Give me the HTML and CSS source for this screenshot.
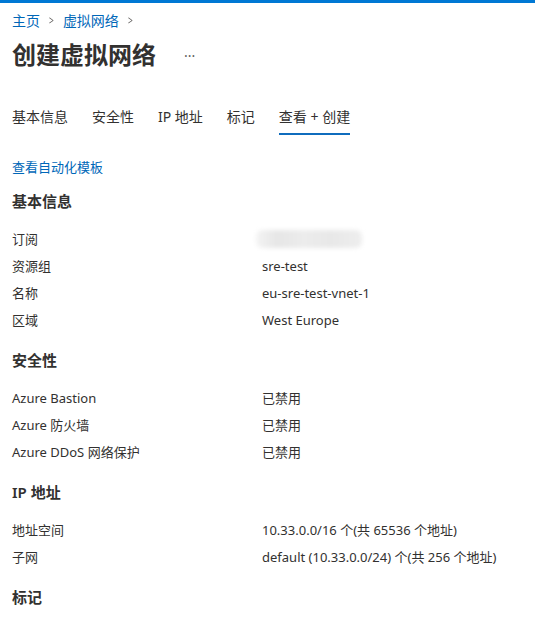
FILE: index.html
```html
<!DOCTYPE html>
<html lang="zh-CN">
<head>
    <meta charset="UTF-8">
    <meta name="viewport" content="width=device-width, initial-scale=1.0">
    <title>创建虚拟网络</title>
    <link rel="stylesheet" href="styles.css">
</head>
<body>
    <div class="top-bar"></div>

    <div class="page">
        <nav class="breadcrumb">
            <a href="#">主页</a>
            <span class="chevron">&gt;</span>
            <a href="#">虚拟网络</a>
            <span class="chevron">&gt;</span>
        </nav>

        <div class="title-row">
            <h1>创建虚拟网络</h1>
            <span class="more">···</span>
        </div>

        <div class="tabs">
            <span class="tab">基本信息</span>
            <span class="tab">安全性</span>
            <span class="tab">IP 地址</span>
            <span class="tab">标记</span>
            <span class="tab active">查看 + 创建</span>
        </div>

        <a class="template-link" href="#">查看自动化模板</a>

        <div class="section">
            <h2>基本信息</h2>
            <div class="row"><span class="label">订阅</span><span class="value"><span class="blurred"></span></span></div>
            <div class="row"><span class="label">资源组</span><span class="value">sre-test</span></div>
            <div class="row"><span class="label">名称</span><span class="value">eu-sre-test-vnet-1</span></div>
            <div class="row"><span class="label">区域</span><span class="value">West Europe</span></div>
        </div>

        <div class="section">
            <h2>安全性</h2>
            <div class="row"><span class="label">Azure Bastion</span><span class="value">已禁用</span></div>
            <div class="row"><span class="label">Azure 防火墙</span><span class="value">已禁用</span></div>
            <div class="row"><span class="label">Azure DDoS 网络保护</span><span class="value">已禁用</span></div>
        </div>

        <div class="section">
            <h2>IP 地址</h2>
            <div class="row"><span class="label">地址空间</span><span class="value">10.33.0.0/16 个(共 65536 个地址)</span></div>
            <div class="row"><span class="label">子网</span><span class="value">default (10.33.0.0/24) 个(共 256 个地址)</span></div>
        </div>

        <div class="section">
            <h2>标记</h2>
        </div>
    </div>
</body>
</html>
```

FILE: styles.css
```css
* {
    margin: 0;
    padding: 0;
    box-sizing: border-box;
}
body {
    font-family: "Segoe UI", "Noto Sans", "Noto Sans CJK SC", sans-serif;
    color: #323130;
    background: white;
    font-size: 13px;
}
.top-bar {
    height: 3px;
    background: #0078d4;
}
.page {
    padding: 0 12px;
}
.breadcrumb {
    display: flex;
    align-items: center;
    gap: 8px;
    margin-top: 7px;
    height: 20px;
    font-size: 14px;
}
.breadcrumb a {
    color: #0067b8;
    text-decoration: none;
}
.chevron {
    color: #605e5c;
    font-size: 12px;
    transform: scaleX(0.7);
}
.title-row {
    display: flex;
    align-items: center;
    margin-top: 9px;
    height: 32px;
}
.title-row h1 {
    font-size: 24px;
    font-weight: 700;
    line-height: 32px;
}
.more {
    margin-left: 28px;
    color: #605e5c;
    font-size: 14px;
}
.tabs {
    display: flex;
    gap: 24px;
    margin-top: 36px;
    font-size: 14px;
}
.tab {
    line-height: 20px;
    padding-bottom: 6px;
    border-bottom: 2px solid transparent;
}
.tab.active {
    border-bottom-color: #0f6cbd;
}
.template-link {
    display: block;
    margin-top: 22px;
    line-height: 20px;
    color: #0067b8;
    text-decoration: none;
    width: max-content;
}
.section {
    margin-top: 13px;
    margin-bottom: 1px;
}
.section + .section {
    margin-top: 16px;
}
.section h2 {
    font-size: 15px;
    font-weight: 600;
    line-height: 22px;
    margin-bottom: 4px;
}
.row {
    display: flex;
    align-items: center;
    height: 27px;
}
.section h2 + .row {
    margin-top: 13px;
}
.label {
    width: 250px;
    flex-shrink: 0;
}
.blurred {
    display: inline-block;
    width: 106px;
    height: 18px;
    margin-left: -6px;
    border-radius: 6px;
    background: linear-gradient(90deg, #f4f4f4 0%, #e6e6e6 20%, #ececec 45%, #e8e8e8 70%, #eeeeee 100%);
    filter: blur(2px);
    vertical-align: middle;
}
```
